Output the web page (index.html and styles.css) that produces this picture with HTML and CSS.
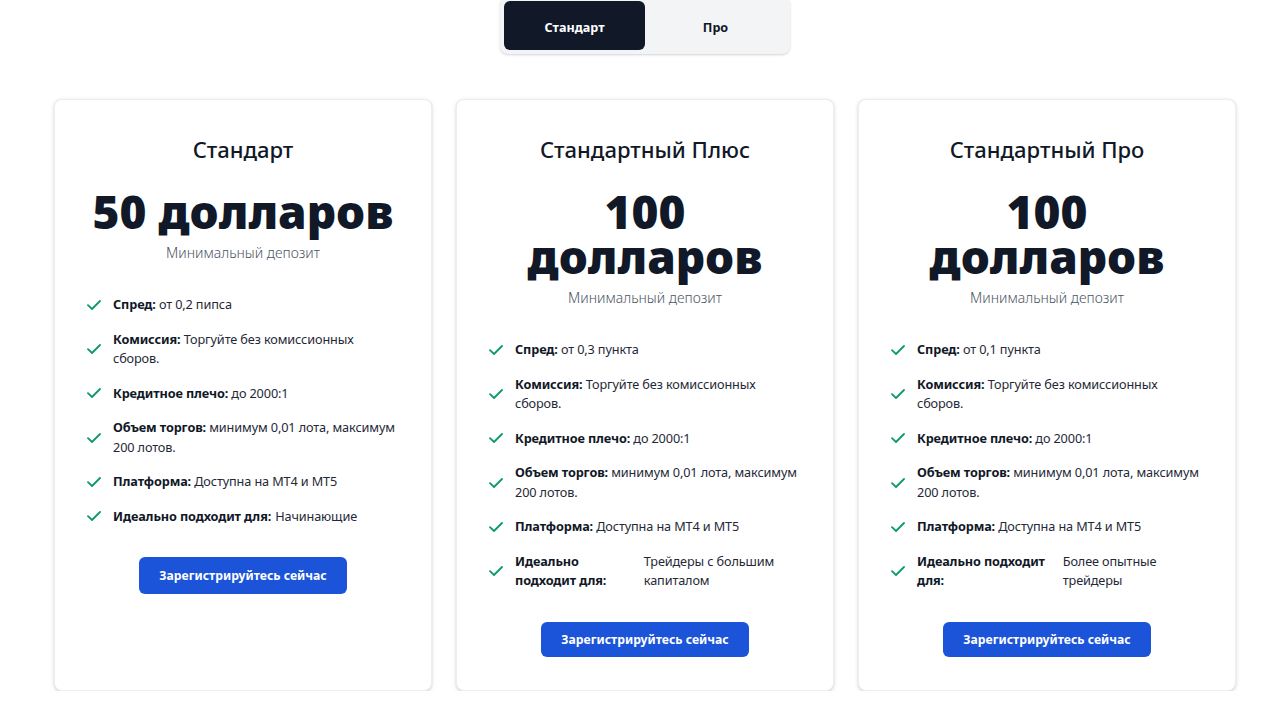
FILE: index.html
```html
<!DOCTYPE html>
<html lang="ru">
<head>
<meta charset="utf-8">
<title>Тарифы</title>
<link rel="stylesheet" href="styles.css">
</head>
<body>
<div class="page">
  <div class="toggle-wrap">
    <div class="toggle">
      <button class="tab active">Стандарт</button>
      <button class="tab">Про</button>
    </div>
  </div>

  <div class="cards">
    <div class="card">
      <h2 class="card-title">Стандарт</h2>
      <div class="price">50 долларов</div>
      <div class="sub">Минимальный депозит</div>
      <ul class="features">
        <li><svg class="check" viewBox="0 0 14 10"><path d="M1 5.2l4 3.8L13 1"/></svg><span class="txt"><b>Спред:</b> от 0,2 пипса</span></li>
        <li><svg class="check" viewBox="0 0 14 10"><path d="M1 5.2l4 3.8L13 1"/></svg><span class="txt"><b>Комиссия:</b> Торгуйте без комиссионных сборов.</span></li>
        <li><svg class="check" viewBox="0 0 14 10"><path d="M1 5.2l4 3.8L13 1"/></svg><span class="txt"><b>Кредитное плечо:</b> до 2000:1</span></li>
        <li><svg class="check" viewBox="0 0 14 10"><path d="M1 5.2l4 3.8L13 1"/></svg><span class="txt"><b>Объем торгов:</b> минимум 0,01 лота, максимум 200 лотов.</span></li>
        <li><svg class="check" viewBox="0 0 14 10"><path d="M1 5.2l4 3.8L13 1"/></svg><span class="txt"><b>Платформа:</b> Доступна на MT4 и MT5</span></li>
        <li><svg class="check" viewBox="0 0 14 10"><path d="M1 5.2l4 3.8L13 1"/></svg><span class="pair"><b>Идеально подходит для:</b><span>Начинающие</span></span></li>
      </ul>
      <button class="cta">Зарегистрируйтесь сейчас</button>
    </div>

    <div class="card">
      <h2 class="card-title">Стандартный Плюс</h2>
      <div class="price">100 долларов</div>
      <div class="sub">Минимальный депозит</div>
      <ul class="features">
        <li><svg class="check" viewBox="0 0 14 10"><path d="M1 5.2l4 3.8L13 1"/></svg><span class="txt"><b>Спред:</b> от 0,3 пункта</span></li>
        <li><svg class="check" viewBox="0 0 14 10"><path d="M1 5.2l4 3.8L13 1"/></svg><span class="txt"><b>Комиссия:</b> Торгуйте без комиссионных сборов.</span></li>
        <li><svg class="check" viewBox="0 0 14 10"><path d="M1 5.2l4 3.8L13 1"/></svg><span class="txt"><b>Кредитное плечо:</b> до 2000:1</span></li>
        <li><svg class="check" viewBox="0 0 14 10"><path d="M1 5.2l4 3.8L13 1"/></svg><span class="txt"><b>Объем торгов:</b> минимум 0,01 лота, максимум 200 лотов.</span></li>
        <li><svg class="check" viewBox="0 0 14 10"><path d="M1 5.2l4 3.8L13 1"/></svg><span class="txt"><b>Платформа:</b> Доступна на MT4 и MT5</span></li>
        <li><svg class="check" viewBox="0 0 14 10"><path d="M1 5.2l4 3.8L13 1"/></svg><span class="pair"><b>Идеально подходит для:</b><span>Трейдеры с большим капиталом</span></span></li>
      </ul>
      <button class="cta">Зарегистрируйтесь сейчас</button>
    </div>

    <div class="card">
      <h2 class="card-title">Стандартный Про</h2>
      <div class="price">100 долларов</div>
      <div class="sub">Минимальный депозит</div>
      <ul class="features">
        <li><svg class="check" viewBox="0 0 14 10"><path d="M1 5.2l4 3.8L13 1"/></svg><span class="txt"><b>Спред:</b> от 0,1 пункта</span></li>
        <li><svg class="check" viewBox="0 0 14 10"><path d="M1 5.2l4 3.8L13 1"/></svg><span class="txt"><b>Комиссия:</b> Торгуйте без комиссионных сборов.</span></li>
        <li><svg class="check" viewBox="0 0 14 10"><path d="M1 5.2l4 3.8L13 1"/></svg><span class="txt"><b>Кредитное плечо:</b> до 2000:1</span></li>
        <li><svg class="check" viewBox="0 0 14 10"><path d="M1 5.2l4 3.8L13 1"/></svg><span class="txt"><b>Объем торгов:</b> минимум 0,01 лота, максимум 200 лотов.</span></li>
        <li><svg class="check" viewBox="0 0 14 10"><path d="M1 5.2l4 3.8L13 1"/></svg><span class="txt"><b>Платформа:</b> Доступна на MT4 и MT5</span></li>
        <li><svg class="check" viewBox="0 0 14 10"><path d="M1 5.2l4 3.8L13 1"/></svg><span class="pair"><b>Идеально подходит для:</b><span>Более опытные трейдеры</span></span></li>
      </ul>
      <button class="cta">Зарегистрируйтесь сейчас</button>
    </div>
  </div>
</div>
</body>
</html>
```

FILE: styles.css
```css
* { box-sizing: border-box; }

html, body {
  margin: 0;
  padding: 0;
  background: #ffffff;
}

body {
  font-family: "Noto Sans", "Open Sans", "Liberation Sans", sans-serif;
  color: #111827;
}

.page {
  padding: 0 40px 0 54px;
}

.toggle-wrap {
  display: flex;
  justify-content: center;
  margin-top: -3px;
}

.toggle {
  display: flex;
  padding: 4px;
  background: #f3f4f6;
  border-radius: 8px;
  box-shadow: 0 1px 3px rgba(0, 0, 0, 0.12), 0 1px 2px rgba(0, 0, 0, 0.06);
}

.tab {
  width: 141px;
  height: 49px;
  padding: 3px 0 0;
  border: 0;
  border-radius: 6px;
  background: transparent;
  font-family: inherit;
  font-size: 12.6px;
  font-weight: 700;
  color: #111827;
  cursor: pointer;
}

.tab.active {
  background: #111827;
  color: #ffffff;
}

.cards {
  display: grid;
  grid-template-columns: repeat(3, 1fr);
  gap: 24px;
  margin-top: 45px;
}

.card {
  display: flex;
  flex-direction: column;
  align-items: center;
  text-align: center;
  height: 592px;
  padding: 33px 32px 33px;
  border: 1px solid #eceef1;
  border-radius: 8px;
  box-shadow: 0 1px 4px rgba(0, 0, 0, 0.14), 0 1px 2px rgba(0, 0, 0, 0.06);
  background: #fff;
}

.card-title {
  margin: 0;
  font-size: 22px;
  line-height: 32px;
  font-weight: 500;
  color: #111827;
}

.price {
  margin-top: 24px;
  font-size: 46px;
  line-height: 45px;
  font-weight: 900;
  color: #111827;
}

.sub {
  margin-top: 9px;
  font-size: 14px;
  line-height: 20px;
  font-weight: 300;
  color: #4b5563;
}

.features {
  list-style: none;
  margin: 32px 0 0;
  padding: 0;
  align-self: stretch;
  display: flex;
  flex-direction: column;
  gap: 15px;
  text-align: left;
}

.features li {
  display: flex;
  align-items: center;
  gap: 12px;
  font-size: 12.7px;
  line-height: 19.5px;
  letter-spacing: -0.12px;
  color: #1f2937;
}

.check {
  flex: none;
  width: 14px;
  height: 10px;
  fill: none;
  stroke: #0d9b63;
  stroke-width: 1.8;
  stroke-linecap: round;
  stroke-linejoin: round;
}

.txt b, .pair b {
  font-weight: 700;
  color: #111827;
}

.pair {
  display: flex;
  gap: 4px;
}

.cta {
  margin-top: 31px;
  height: 37px;
  padding: 0 20px;
  border: 0;
  border-radius: 6px;
  background: #1c54d9;
  color: #ffffff;
  font-family: inherit;
  font-size: 12.2px;
  font-weight: 700;
  cursor: pointer;
}
```
